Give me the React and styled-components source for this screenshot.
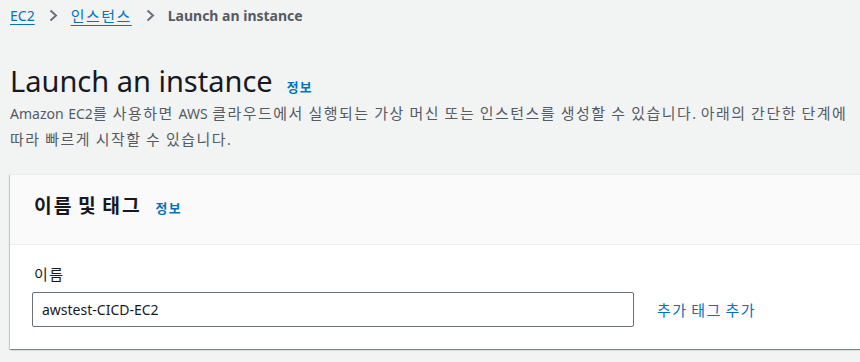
import React from "react";
import styled, { createGlobalStyle } from "styled-components";

const GlobalStyle = createGlobalStyle`
  html, body {
    margin: 0;
    padding: 0;
    background: #f2f3f3;
  }
  body {
    font-family: "Noto Sans", "Noto Sans CJK KR", sans-serif;
    color: #16191f;
    overflow: hidden;
  }
`;

// Hangul runs get a slightly larger, more open setting to match the reference font
const Ko = styled.span`
  font-family: "Noto Sans CJK KR", sans-serif;
  font-size: 1.07em;
  letter-spacing: 0.1em;
`;

const ko = (text) =>
  text.split(/([\uAC00-\uD7A3]+)/).map((part, i) =>
    /[\uAC00-\uD7A3]/.test(part) ? <Ko key={i}>{part}</Ko> : part
  );

const Page = styled.div`
  width: 860px;
  height: 362px;
  padding: 0 0 0 10px;
  box-sizing: border-box;
  overflow: hidden;
`;

const Crumbs = styled.nav`
  display: flex;
  align-items: center;
  height: 30px;
  font-size: 14px;
`;

const CrumbLink = styled.a`
  color: #0073bb;
  text-decoration: underline;
  text-underline-offset: 3px;
  cursor: pointer;
`;

const CrumbCurrent = styled.span`
  color: #545b64;
  font-weight: 700;
`;

const Sep = styled.span`
  display: inline-flex;
  align-items: center;
  margin: 0 13px 0 14px;
`;

const Chevron = () => (
  <Sep>
    <svg width="9" height="13" viewBox="0 0 9 13" fill="none">
      <path d="M1.5 1.5 L7 6.5 L1.5 11.5" stroke="#687078" strokeWidth="2" />
    </svg>
  </Sep>
);

const Header = styled.header`
  margin-top: 32px;
`;

const TitleRow = styled.div`
  display: flex;
  align-items: baseline;
  gap: 14px;
`;

const Title = styled.h1`
  margin: 0;
  font-size: 29px;
  font-weight: 400;
  line-height: 38px;
  color: #16191f;
`;

const Info = styled.a`
  color: #0073bb;
  font-size: 12px;
  font-weight: 700;
  cursor: pointer;
`;

const Desc = styled.p`
  margin: 0;
  font-size: 14px;
  line-height: 25px;
  word-spacing: 1px;
  color: #545b64;
  white-space: nowrap;
`;

const Card = styled.section`
  margin-top: 22px;
  margin-right: -20px;
  background: #fff;
  border-top: 1px solid #eaeded;
  box-shadow: 0 1px 1px 0 rgba(0, 28, 36, 0.3),
    1px 1px 1px 0 rgba(0, 28, 36, 0.15), -1px 1px 1px 0 rgba(0, 28, 36, 0.15);
`;

const CardHead = styled.div`
  display: flex;
  align-items: baseline;
  gap: 14px;
  height: 70px;
  box-sizing: border-box;
  padding: 16px 24px 0;
  background: #fafafa;
  border-bottom: 1px solid #eaeded;
`;

const CardTitle = styled.h2`
  margin: 0;
  font-size: 18px;
  font-weight: 700;
  line-height: 28px;
  color: #16191f;
`;

const CardBody = styled.div`
  padding: 18px 22px 22px;
`;

const Label = styled.label`
  display: block;
  font-size: 14px;
  line-height: 22px;
  color: #16191f;
  margin-left: 2px;
  margin-bottom: 6px;
`;

const FieldRow = styled.div`
  display: flex;
  align-items: center;
  gap: 23px;
`;

const Input = styled.input`
  width: 602px;
  height: 35px;
  box-sizing: border-box;
  border: 1px solid #687078;
  border-radius: 2px;
  padding: 0 9px;
  font-family: inherit;
  font-size: 14px;
  color: #16191f;
  background: #fff;
  outline: none;
`;

const TextLink = styled.a`
  color: #0073bb;
  font-size: 14px;
  cursor: pointer;
`;

export default function App() {
  return (
    <>
      <GlobalStyle />
      <Page>
        <Crumbs>
          <CrumbLink>EC2</CrumbLink>
          <Chevron />
          <CrumbLink>{ko("인스턴스")}</CrumbLink>
          <Chevron />
          <CrumbCurrent>Launch an instance</CrumbCurrent>
        </Crumbs>
        <Header>
          <TitleRow>
            <Title>Launch an instance</Title>
            <Info>{ko("정보")}</Info>
          </TitleRow>
          <Desc>
            {ko(
              "Amazon EC2를 사용하면 AWS 클라우드에서 실행되는 가상 머신 또는 인스턴스를 생성할 수 있습니다. 아래의 간단한 단계에"
            )}
            <br />
            {ko("따라 빠르게 시작할 수 있습니다.")}
          </Desc>
        </Header>
        <Card>
          <CardHead>
            <CardTitle>{ko("이름 및 태그")}</CardTitle>
            <Info>{ko("정보")}</Info>
          </CardHead>
          <CardBody>
            <Label>{ko("이름")}</Label>
            <FieldRow>
              <Input defaultValue="awstest-CICD-EC2" />
              <TextLink>{ko("추가 태그 추가")}</TextLink>
            </FieldRow>
          </CardBody>
        </Card>
      </Page>
    </>
  );
}
